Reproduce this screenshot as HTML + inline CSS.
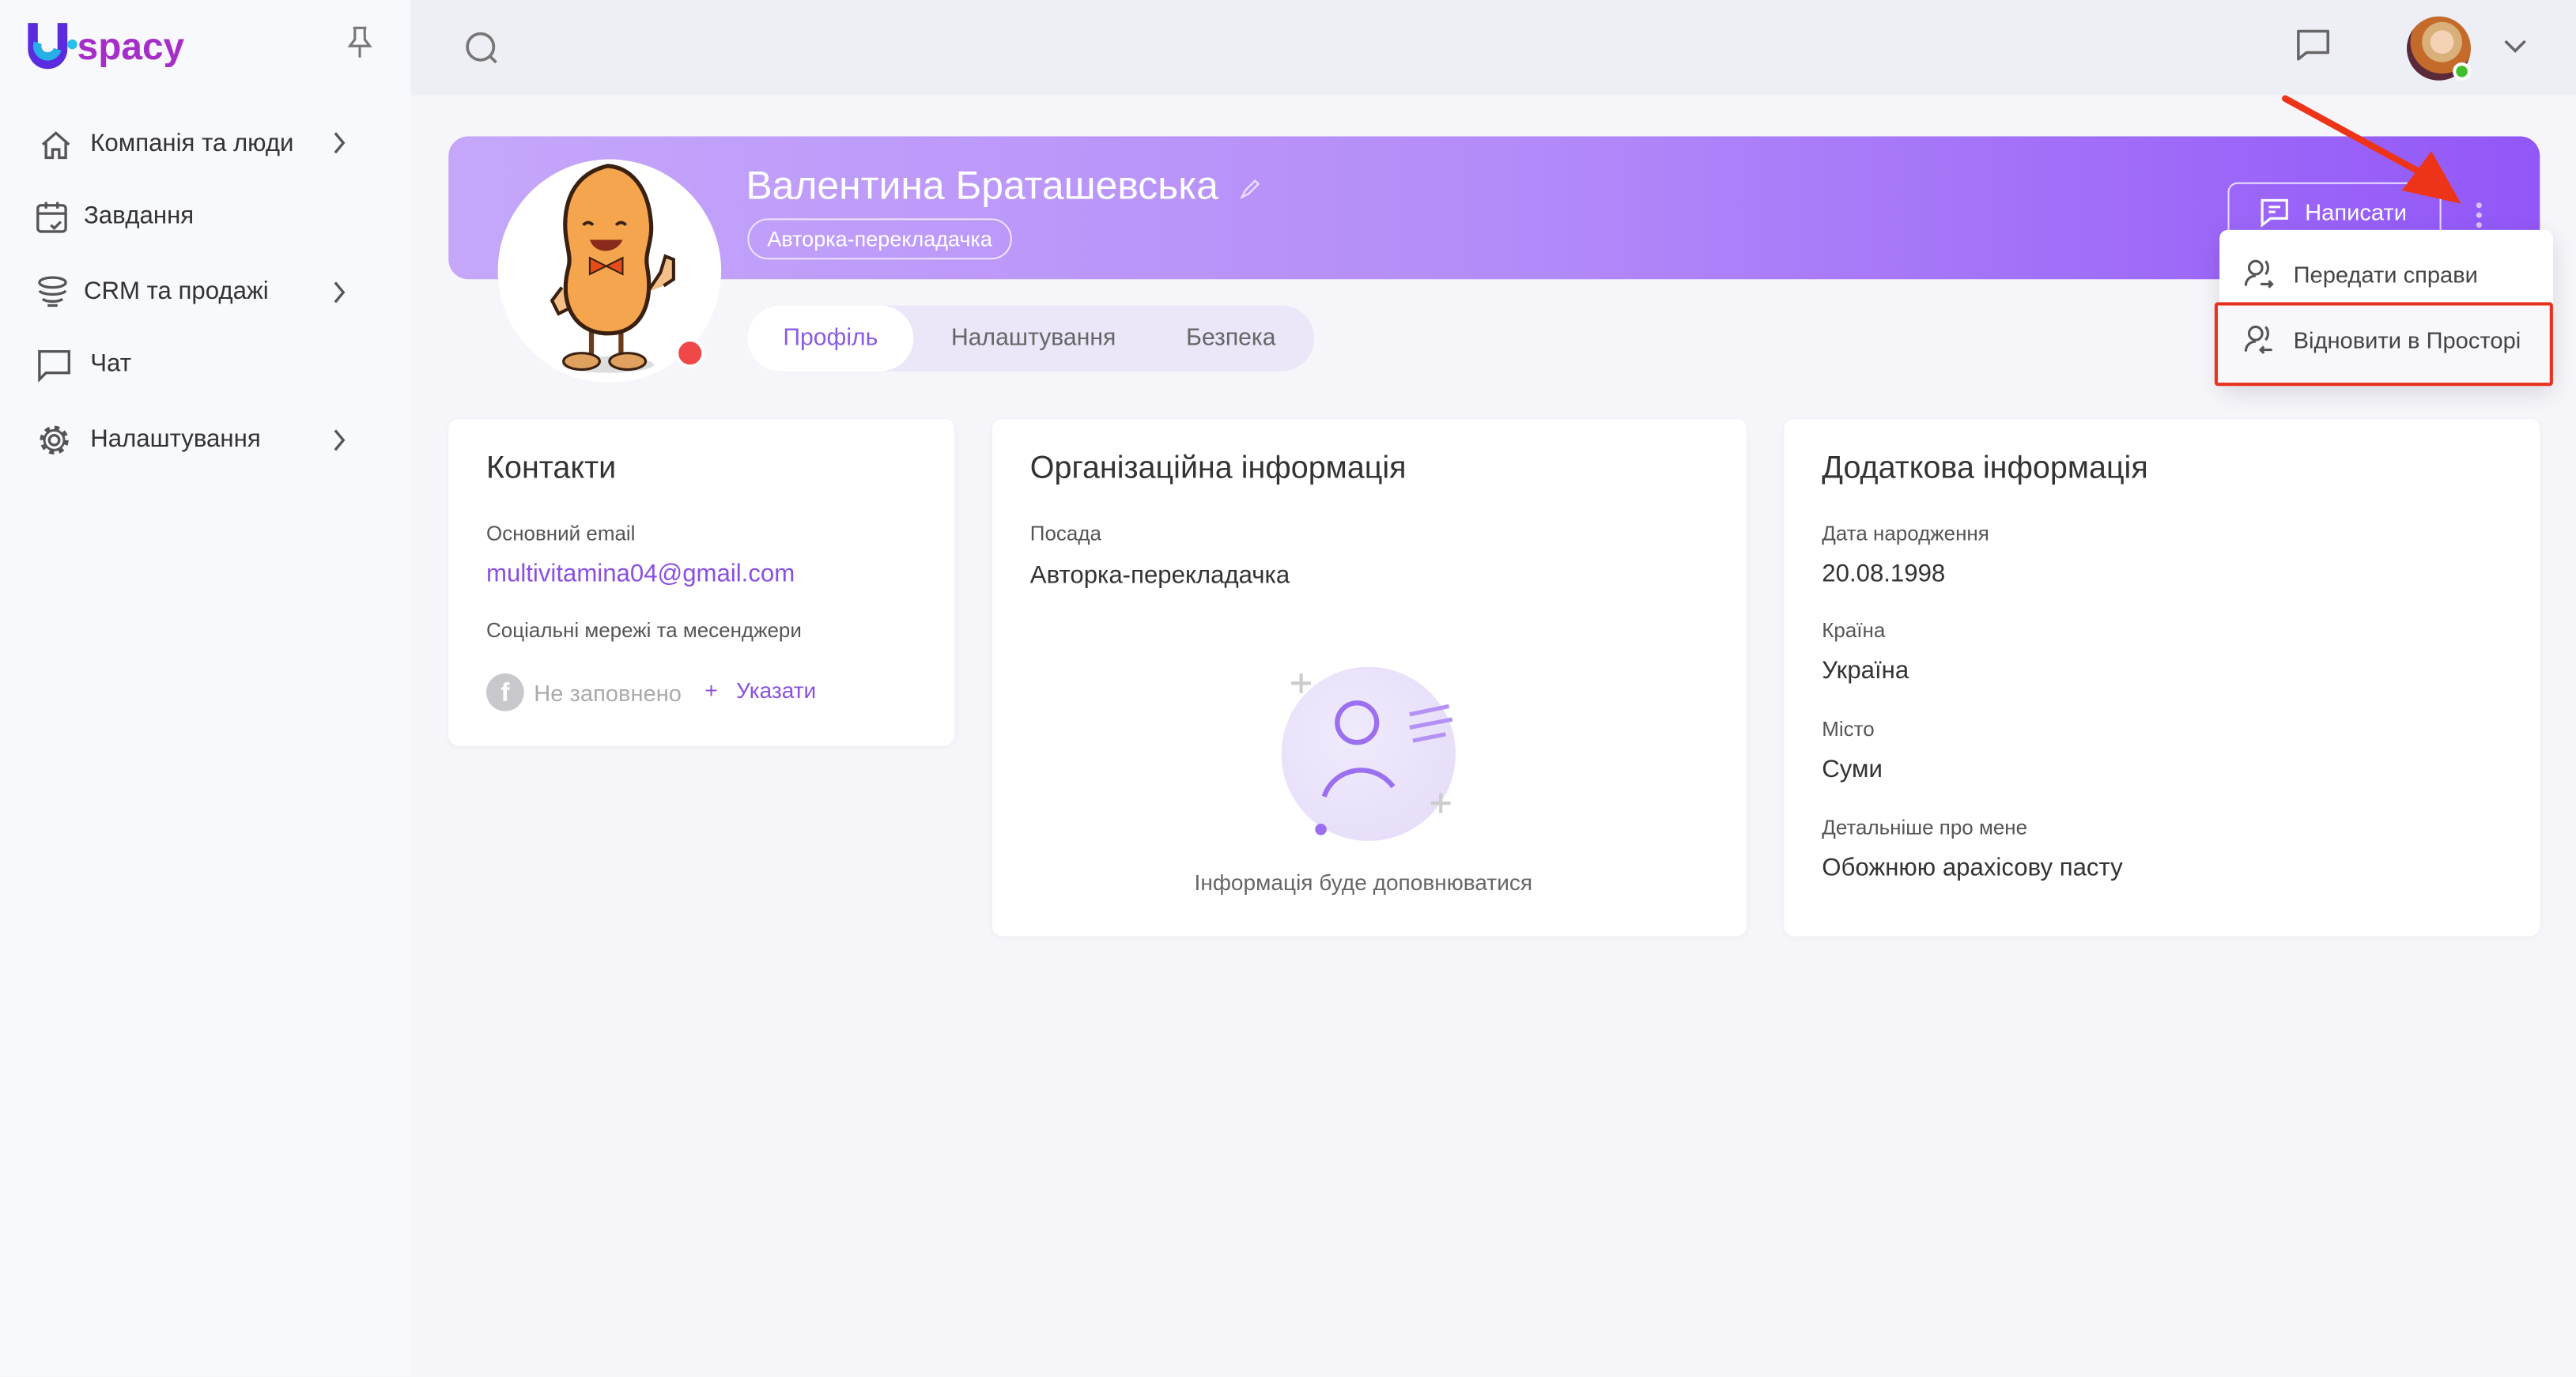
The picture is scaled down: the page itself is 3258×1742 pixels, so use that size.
<!DOCTYPE html>
<html><head><meta charset="utf-8"><style>
*{margin:0;padding:0;box-sizing:border-box}
html,body{width:3258px;height:1742px;overflow:hidden;background:#f5f5fa}
#w{width:1568px;height:838px;transform:scale(2.0778);transform-origin:0 0;position:relative;font-family:"Liberation Sans","Noto Sans CJK SC",sans-serif;color:#3d3d45}
.a{position:absolute}
.side{left:0;top:0;width:250px;height:838px;background:#f8f9fc}
.top{left:250px;top:0;width:1318px;height:58px;background:#eeeef5}
.nav{font-size:15px;color:#333}
.card{background:#fff;border-radius:6px;box-shadow:0 1px 4px rgba(0,0,0,.04)}
.h{font-size:19px;color:#333}
.l{font-size:12.5px;color:#555}
.v{font-size:15px;color:#333}
svg{position:absolute;overflow:visible}
</style></head><body><div id="w">
<div class="a side"></div><div class="a top"></div>
<!-- logo -->
<svg style="left:15px;top:12px" width="112" height="34"><path d="M2 2v16a12 12 0 0 0 24 0V2h-6v16a6 6 0 0 1-12 0V2z" fill="#5b2be0"/><path d="M8 14a6 6 0 0 0 12 4" stroke="#27b0e8" stroke-width="5" fill="none"/><circle cx="29" cy="15" r="3" fill="#27c0e8"/><text x="32" y="24" font-size="23" font-family="Liberation Sans" fill="#a62ec8" font-weight="bold">spacy</text></svg>
<svg style="left:210px;top:16px" width="18" height="20"><path d="M5 1h8M6 1v7l-3 4h12l-3-4V1M9 12v7" stroke="#777" stroke-width="1.5" fill="none"/></svg>
<!-- nav -->
<svg style="left:24px;top:79px" width="20" height="18"><path d="M2 9L10 2l8 7M4 8v9h4v-5h4v5h4V8" stroke="#555" stroke-width="1.6" fill="none"/></svg>
<div class="a nav" style="left:55px;top:79px">Компанія та люди</div>
<svg style="left:22px;top:122px" width="20" height="20"><rect x="1" y="3" width="17" height="16" rx="2" stroke="#555" stroke-width="1.6" fill="none"/><path d="M1 8h17M6 1v4M13 1v4M9 15l2 2 4-4" stroke="#555" stroke-width="1.6" fill="none"/></svg>
<div class="a nav" style="left:51px;top:123px">Завдання</div>
<svg style="left:22px;top:168px" width="20" height="20"><ellipse cx="10" cy="4" rx="8" ry="3" stroke="#555" stroke-width="1.6" fill="none"/><path d="M2 9c2 3 14 3 16 0M4 14c2 2 10 2 12 0M7 18h6" stroke="#555" stroke-width="1.6" fill="none"/></svg>
<div class="a nav" style="left:51px;top:169px">CRM та продажі</div>
<svg style="left:23px;top:213px" width="20" height="20"><path d="M1 1h18v13H5l-4 4z" stroke="#555" stroke-width="1.6" fill="none"/></svg>
<div class="a nav" style="left:55px;top:213px">Чат</div>
<svg style="left:23px;top:258px" width="20" height="20"><circle cx="10" cy="10" r="3" stroke="#555" stroke-width="1.6" fill="none"/><circle cx="10" cy="10" r="7.5" stroke="#555" stroke-width="2.5" stroke-dasharray="3 2.9" fill="none"/><circle cx="10" cy="10" r="6" stroke="#555" stroke-width="1.4" fill="none"/></svg>
<div class="a nav" style="left:55px;top:259px">Налаштування</div>
<svg style="left:202px;top:80px" width="10" height="200"><path d="M2 1l5 6-5 6M2 92l5 6-5 6M2 182l5 6-5 6" stroke="#555" stroke-width="1.6" fill="none"/></svg>
<!-- top -->
<svg style="left:283px;top:19px" width="22" height="22"><circle cx="9.5" cy="9.5" r="8" stroke="#777" stroke-width="1.8" fill="none"/><path d="M15 15l4 4" stroke="#777" stroke-width="1.8"/></svg>
<svg style="left:1398px;top:18px" width="22" height="22"><path d="M1 1h18v13H6l-5 4z" stroke="#666" stroke-width="1.7" fill="none" stroke-linejoin="round"/></svg>
<div class="a" style="left:1465px;top:10px;width:39px;height:39px;border-radius:50%;background:radial-gradient(circle at 55% 40%,#f3d2b5 0 22%,#d9b07a 23% 38%,#c46b2c 39% 60%,#5a2a3a 61%)"></div>
<div class="a" style="left:1493px;top:38px;width:11px;height:11px;border-radius:50%;background:#3dc02a;border:2px solid #fff"></div>
<svg style="left:1524px;top:24px" width="14" height="10"><path d="M1 1l6 6 6-6" stroke="#666" stroke-width="1.7" fill="none"/></svg>
<!-- banner -->
<div class="a" style="left:273px;top:83px;width:1273px;height:87px;border-radius:12px;background:linear-gradient(90deg,#c5a7fa,#b48cf9 50%,#9257f8)"></div>
<div class="a" style="left:303px;top:97px;width:136px;height:136px;border-radius:50%;background:#fff"></div>
<svg style="left:322px;top:100px" width="96" height="130"><ellipse cx="48" cy="122" rx="28" ry="5" fill="#ddd"/><path d="M38 100v18M56 100v18" stroke="#6b3b1a" stroke-width="3"/><ellipse cx="32" cy="120" rx="11" ry="5" fill="#e0a060" stroke="#3a2010" stroke-width="1.5"/><ellipse cx="60" cy="120" rx="11" ry="5" fill="#e0a060" stroke="#3a2010" stroke-width="1.5"/><path d="M20 75l-6 8 4 8 8-4" stroke="#3a2010" stroke-width="2" fill="#f3c08a"/><path d="M72 78l8-12 3-10 5 2v12l-6 4" stroke="#3a2010" stroke-width="2" fill="#f3c08a"/><path d="M48 1c-18 4-26 18-26 36 0 12 4 18 2 26-6 22 4 40 24 40s28-18 24-40c-2-10 4-16 2-30C72 14 62 2 48 1z" fill="#f5a54e" stroke="#3a2010" stroke-width="2.5"/><path d="M37 46c3 9 16 9 20 0z" fill="#8a2a1a"/><path d="M33 37q3-3 6 0M53 37q3-3 6 0" stroke="#3a2010" stroke-width="1.8" fill="none"/><path d="M37 57l10 5-10 5zM57 57l-10 5 10 5z" fill="#e64b1a" stroke="#3a2010"/></svg>
<div class="a" style="left:411px;top:206px;width:18px;height:18px;border-radius:50%;background:#f04848;border:2px solid #fff"></div>
<div class="a" style="left:454px;top:100px;font-size:24px;color:#fff">Валентина Браташевська</div>
<svg style="left:755px;top:109px" width="12" height="12"><path d="M1 11l2-4 6-6 2 2-6 6z" stroke="#e9dcff" stroke-width="1.2" fill="none"/></svg>
<div class="a" style="left:455px;top:133px;width:161px;height:25px;border:1px solid #efe4ff;border-radius:13px;color:#fff;font-size:13px;line-height:23px;text-align:center">Авторка-перекладачка</div>
<div class="a" style="left:455px;top:186px;width:345px;height:40px;border-radius:20px;background:#ebe6f8"></div>
<div class="a" style="left:455px;top:186px;width:101px;height:40px;border-radius:20px;background:#fff;color:#8a5ce6;font-size:14.5px;line-height:40px;text-align:center">Профіль</div>
<div class="a" style="left:579px;top:198px;font-size:14.5px;color:#666">Налаштування</div>
<div class="a" style="left:722px;top:198px;font-size:14.5px;color:#666">Безпека</div>
<div class="a" style="left:1356px;top:111px;width:130px;height:36px;border:1px solid #e8dcff;border-radius:6px;color:#fff;font-size:14px;line-height:34px;padding-left:46px">Написати</div>
<svg style="left:1376px;top:121px" width="18" height="17"><path d="M1 1h15v11H6l-5 4z" stroke="#fff" stroke-width="1.5" fill="none"/><path d="M5 5h7M5 8h4" stroke="#fff" stroke-width="1.5"/></svg>
<svg style="left:1505px;top:122px" width="8" height="18"><circle cx="4" cy="3" r="1.7" fill="#d8c2ff"/><circle cx="4" cy="9" r="1.7" fill="#d8c2ff"/><circle cx="4" cy="15" r="1.7" fill="#d8c2ff"/></svg>
<!-- dropdown -->
<div class="a" style="left:1351px;top:140px;width:203px;height:95px;background:#fff;border-radius:5px;box-shadow:0 4px 14px rgba(0,0,0,.12)"></div>
<div class="a" style="left:1348px;top:184px;width:206px;height:51px;background:#f8f8fc;border:2px solid #e8321e;border-radius:2px"></div>
<svg style="left:1366px;top:157px" width="20" height="70"><circle cx="7" cy="6" r="4" stroke="#555" stroke-width="1.5" fill="none"/><path d="M1 17c0-4 3-6 6-6M13 2c2 2 2 6 0 8M10 16h7M15 14l2 2-2 2" stroke="#555" stroke-width="1.5" fill="none"/><g transform="translate(0,40)"><circle cx="7" cy="6" r="4" stroke="#555" stroke-width="1.5" fill="none"/><path d="M1 17c0-4 3-6 6-6M13 2c2 2 2 6 0 8M10 16h7M12 14l-2 2 2 2" stroke="#555" stroke-width="1.5" fill="none"/></g></svg>
<div class="a" style="left:1396px;top:159px;font-size:14px;color:#444">Передати справи</div>
<div class="a" style="left:1396px;top:199px;font-size:14px;color:#444">Відновити в Просторі</div>
<svg style="left:0;top:0" width="1568" height="838"><path d="M1391 60L1477 107" stroke="#ee3418" stroke-width="4" stroke-linecap="round"/><path d="M1498 124l-36-8 18-24z" fill="#ee3418"/></svg>
<!-- cards -->
<div class="a card" style="left:273px;top:255px;width:308px;height:199px"></div>
<div class="a h" style="left:296px;top:275px">Контакти</div>
<div class="a l" style="left:296px;top:318px">Основний email</div>
<div class="a" style="left:296px;top:341px;font-size:15px;color:#8a4fe0">multivitamina04@gmail.com</div>
<div class="a l" style="left:296px;top:377px">Соціальні мережі та месенджери</div>
<div class="a" style="left:296px;top:410px;width:23px;height:23px;border-radius:50%;background:#c8c8cc;color:#fff;font-weight:bold;font-size:16px;text-align:center;line-height:25px">f</div>
<div class="a" style="left:325px;top:414px;font-size:14px;color:#aaa">Не заповнено</div>
<div class="a" style="left:429px;top:413px;font-size:13.5px;color:#8a4fe0">+&nbsp;&nbsp; Указати</div>
<div class="a card" style="left:604px;top:255px;width:459px;height:315px"></div>
<div class="a h" style="left:627px;top:275px">Організаційна інформація</div>
<div class="a l" style="left:627px;top:318px">Посада</div>
<div class="a v" style="left:627px;top:342px">Авторка-перекладачка</div>
<div class="a" style="left:780px;top:406px;width:106px;height:106px;border-radius:50%;background:radial-gradient(circle at 40% 40%,#f0eafc,#e4daf8)"></div>
<svg style="left:784px;top:405px" width="110" height="110"><circle cx="42" cy="35" r="12" stroke="#9a6ff0" stroke-width="3" fill="none"/><path d="M22 80c6-18 30-22 42-6" stroke="#9a6ff0" stroke-width="3" fill="none"/><path d="M74 30l24-5M74 38l26-5M76 46l20-4" stroke="#b492f5" stroke-width="2.5"/><path d="M8 5v12M2 11h12M93 78v12M87 84h12" stroke="#ccc" stroke-width="2"/><circle cx="20" cy="100" r="3.5" fill="#9a6ff0"/></svg>
<div class="a" style="left:727px;top:530px;font-size:13.5px;color:#666">Інформація буде доповнюватися</div>
<div class="a card" style="left:1086px;top:255px;width:460px;height:315px"></div>
<div class="a h" style="left:1109px;top:275px">Додаткова інформація</div>
<div class="a l" style="left:1109px;top:318px">Дата народження</div>
<div class="a v" style="left:1109px;top:341px">20.08.1998</div>
<div class="a l" style="left:1109px;top:377px">Країна</div>
<div class="a v" style="left:1109px;top:400px">Україна</div>
<div class="a l" style="left:1109px;top:437px">Місто</div>
<div class="a v" style="left:1109px;top:460px">Суми</div>
<div class="a l" style="left:1109px;top:497px">Детальніше про мене</div>
<div class="a v" style="left:1109px;top:520px">Обожнюю арахісову пасту</div>
</div></body></html>
